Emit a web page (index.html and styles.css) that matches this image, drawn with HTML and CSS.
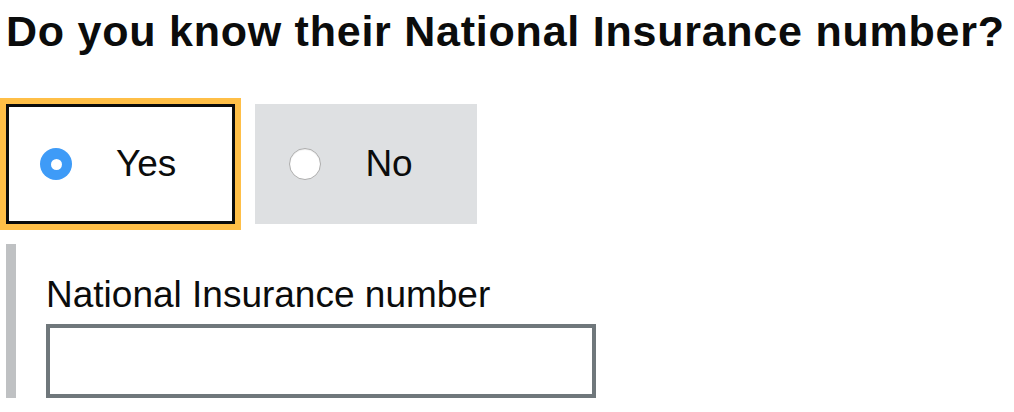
FILE: index.html
```html
<!DOCTYPE html>
<html lang="en">
<head>
<meta charset="utf-8">
<title>National Insurance number</title>
<link rel="stylesheet" href="styles.css">
</head>
<body>
<main class="page">
  <fieldset class="fieldset">
    <legend class="heading">Do you know their National Insurance number?</legend>
    <div class="choices">
      <label class="choice choice--selected">
        <span class="radio radio--checked"></span>
        <span class="choice-text">Yes</span>
      </label>
      <label class="choice">
        <span class="radio"></span>
        <span class="choice-text">No</span>
      </label>
    </div>
    <div class="panel">
      <label class="field-label" for="nino">National Insurance number</label>
      <input class="text-input" id="nino" type="text">
    </div>
  </fieldset>
</main>
</body>
</html>
```
FILE: styles.css
```css
html, body {
  margin: 0;
  padding: 0;
  background: #ffffff;
}

body {
  font-family: "Liberation Sans", Arial, sans-serif;
  color: #0b0c0c;
}

.page {
  padding: 3px 6px 0 6px;
}

.fieldset {
  margin: 0;
  padding: 0;
  border: 0;
  min-width: 0;
}

.heading {
  display: block;
  padding: 0;
  margin: 0 0 45px 0;
  font-size: 43px;
  line-height: 56px;
  font-weight: 700;
  letter-spacing: 0.76px;
  white-space: nowrap;
}

.choices {
  display: flex;
  gap: 20px;
  margin-bottom: 20px;
}

.choice {
  box-sizing: border-box;
  min-width: 222px;
  height: 120px;
  display: flex;
  align-items: center;
  padding: 0 56px 0 31px;
  border: 3px solid transparent;
  background: #dee0e2;
  font-size: 37px;
  line-height: 46px;
}

.choice--selected {
  background: #ffffff;
  border-color: #0b0c0c;
  box-shadow: 0 0 0 6px #ffbf47;
}

.radio {
  box-sizing: border-box;
  width: 32px;
  height: 32px;
  border-radius: 50%;
  background: #ffffff;
  border: 1px solid #adadad;
  box-shadow: inset 0 1px 1px rgba(0, 0, 0, 0.08);
  margin-right: 44px;
  flex: none;
  display: flex;
  align-items: center;
  justify-content: center;
}

.radio--checked {
  border: 0;
  background: #3e9bf7;
  box-shadow: none;
}

.radio--checked::after {
  content: "";
  width: 11px;
  height: 11px;
  border-radius: 50%;
  background: #ffffff;
}

.panel {
  border-left: 10px solid #bfc1c3;
  padding: 27px 0 0 30px;
}

.field-label {
  display: block;
  font-size: 37px;
  line-height: 48px;
  margin-bottom: 5px;
}

.text-input {
  display: block;
  box-sizing: border-box;
  width: 550px;
  height: 74px;
  margin: 0;
  padding: 6px;
  border: 4px solid #6f777b;
  border-radius: 0;
  background: #ffffff;
  font-family: inherit;
  font-size: 37px;
  outline: none;
}
```
